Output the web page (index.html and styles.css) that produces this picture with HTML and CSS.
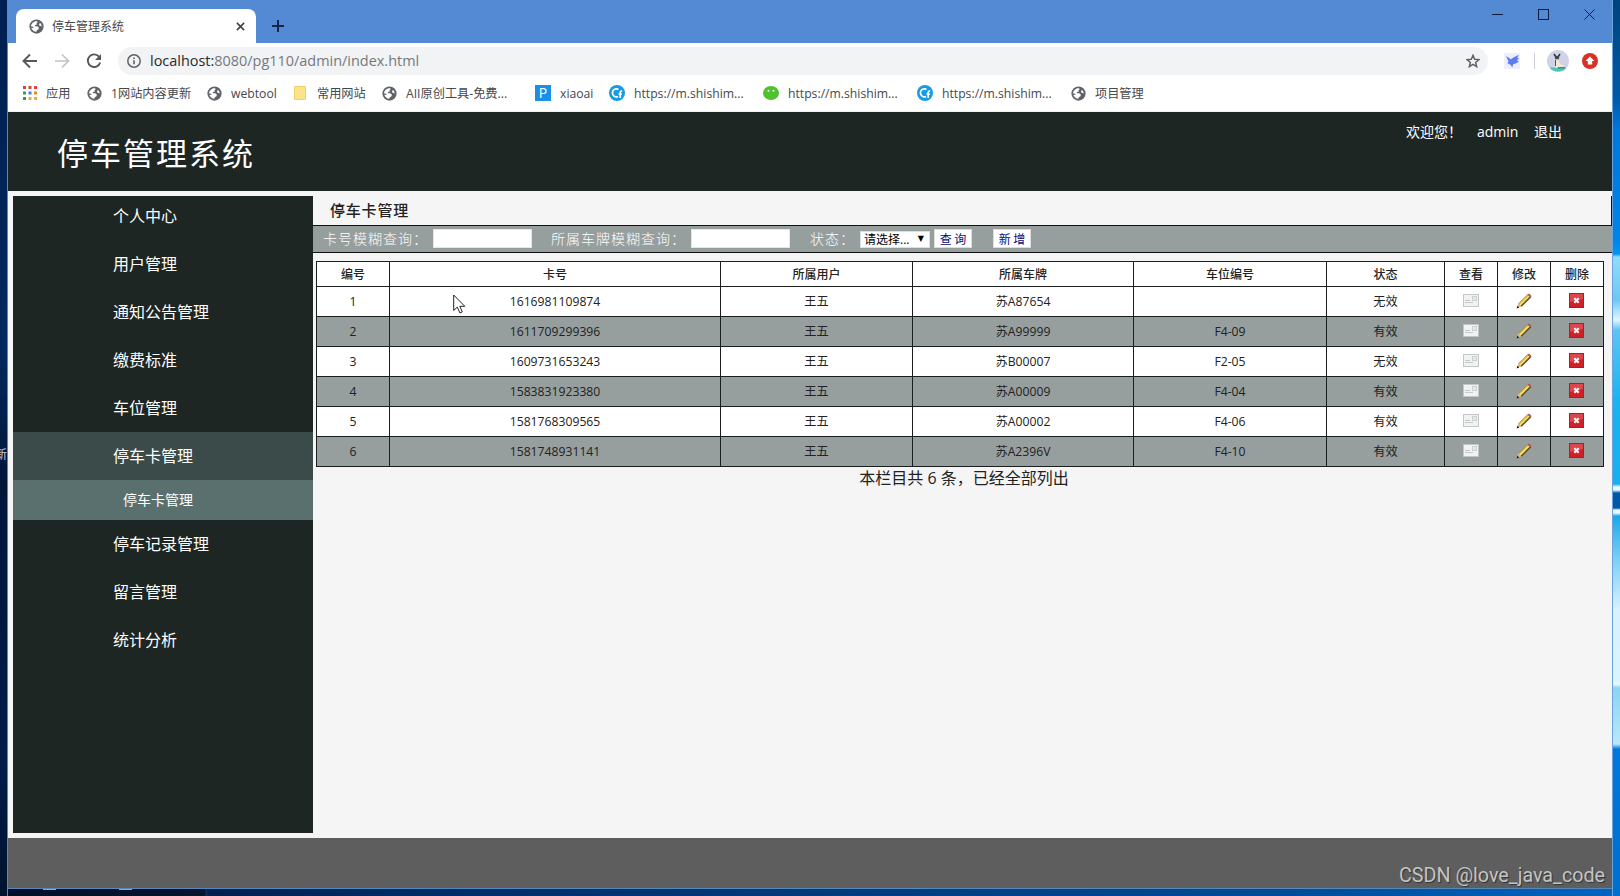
FILE: index.html
```html
<!DOCTYPE html>
<html lang="zh-CN">

<head>
    <meta charset="UTF-8">
    <title>停车管理系统</title>
    <link rel="stylesheet" href="styles.css">
</head>

<body>
    <!-- shared icons -->
    <svg class="defs" width="0" height="0">
        <symbol id="globe" viewBox="0 0 16 16">
            <circle cx="8" cy="8" r="7.600" fill="#5f6368" />
            <path d="M2 7.600C2.600 4.800 4.800 2.800 7.600 2.200L9.400 3.200 8 4.400 8.400 5.800 6.400 6.400 6.200 7.600h2.600l1.800 1.600-.5 1.800-1.700.9-.6 1.800C5.200 13.500 3.100 11.800 2.400 9.400l2.500.3L4.300 8.200z" fill="#fff" />
            <path d="M11.200 4.600l1.500.2L13.600 8l-1.400-.6-1.600-.8z" fill="#fff" />
        </symbol>
        <symbol id="cf" viewBox="0 0 16 16">
            <circle cx="8" cy="8" r="8" fill="#189be6" />
            <path d="M9.500 4.500A4 4 0 1 0 9 11.600M13.200 6.200c-1.600-.4-2 .4-2 1.800v5M9.500 9h3.400" fill="none" stroke="#fff" stroke-width="1.700" />
        </symbol>
        <symbol id="view" viewBox="0 0 16 13">
            <rect x=".5" y=".5" width="15" height="12" fill="#f1f2f3" stroke="#c3c6c7" />
            <rect x="9.500" y="2.500" width="4" height="4" fill="#e6e8e9" stroke="#cdd0d1" />
            <path d="M2 6.500h5M2 8.500h8" stroke="#c6c9ca" />
        </symbol>
        <symbol id="edit" viewBox="0 0 16 16">
            <path d="M1 15l1.500-4.500L12 1.200 14.800 3.800 5.200 13.300z" fill="#e3bf3d" />
            <path d="M3.800 12L13.200 2.600" stroke="#fff0a0" stroke-width="1" />
            <path d="M5.200 13.300L14.800 3.800" stroke="#5f4a12" stroke-width="1.300" />
            <path d="M2.500 10.500L12 1.200" stroke="#a78524" stroke-width=".7" />
            <path d="M11.500 1.700L13 .4l2.600 2.500-1.300 1.500z" fill="#b2574f" />
            <path d="M1 15l1.500-4.500 2.700 2.800z" fill="#d8b98c" />
            <path d="M.6 15.400l.9-2.700 1.700 1.700z" fill="#111" />
        </symbol>
        <symbol id="del" viewBox="0 0 16 15">
            <rect x=".5" y=".5" width="14" height="14" fill="#cf2029" stroke="#a0222a" />
            <path d="M1 1h13v5L1 9z" fill="#dc474e" />
            <path d="M5.300 5.300l4.400 4.400M9.700 5.300l-4.400 4.400" stroke="#fff" stroke-width="2.100" />
        </symbol>
    </svg>

    <div class="desktop-left"><span>新</span></div>

    <div class="window">
        <div class="titlebar">
            <div class="tab">
                <svg class="ico" width="15" height="15"><use href="#globe" /></svg>
                <span>停车管理系统</span>
                <svg class="tab-close" width="9" height="9" viewBox="0 0 10 10"><path d="M1 1l8 8M9 1L1 9" stroke="#3c4043" stroke-width="1.700" /></svg>
            </div>
            <svg class="plus" width="12" height="12" viewBox="0 0 12 12"><path d="M6 0v12M0 6h12" stroke="#15284a" stroke-width="2" /></svg>
            <div class="controls">
                <svg width="11" height="11" viewBox="0 0 11 11"><path d="M0 5.500h11" stroke="#0c1c3c" /></svg>
                <svg width="11" height="11" viewBox="0 0 11 11"><rect x=".5" y=".5" width="10" height="10" fill="none" stroke="#0c1c3c" /></svg>
                <svg width="11" height="11" viewBox="0 0 11 11"><path d="M.5 .5l10 10M10.500 .5l-10 10" stroke="#0c1c3c" /></svg>
            </div>
        </div>

        <div class="toolbar">
            <svg class="nav" width="16" height="16" viewBox="0 0 16 16"><path d="M15 8H2M8 1.500L1.500 8 8 14.500" fill="none" stroke="#55585c" stroke-width="1.900" /></svg>
            <svg class="nav" width="16" height="16" viewBox="0 0 16 16"><path d="M1 8h13M8 1.500L14.500 8 8 14.500" fill="none" stroke="#c0c3c6" stroke-width="1.700" /></svg>
            <svg class="nav" width="16" height="16" viewBox="0 0 16 16"><path d="M13.400 4.200A6.300 6.300 0 1 0 14.200 9.500" fill="none" stroke="#55585c" stroke-width="1.900" /><path d="M15 1v6H9z" fill="#55585c" /></svg>
            <div class="address">
                <svg width="14" height="14" viewBox="0 0 14 14"><circle cx="7" cy="7" r="6.200" fill="none" stroke="#5f6368" stroke-width="1.500" /><path d="M7 6.200v4M7 3.400v1.500" stroke="#5f6368" stroke-width="1.600" /></svg>
                <span class="url"><b>localhost:</b>8080/pg110/admin/index.html</span>
                <svg class="star" width="14" height="14" viewBox="0 0 16 16"><path d="M8 1.500l1.900 4.600 4.900.3-3.800 3.200 1.200 4.800L8 11.800l-4.200 2.600L5 9.600 1.200 6.400l4.900-.3z" fill="none" stroke="#5f6368" stroke-width="1.700" /></svg>
            </div>
            <svg class="bird" width="16" height="16" viewBox="0 0 16 16"><rect width="16" height="16" fill="#eeeefe" /><path d="M2 3l5 3.200L9 4.800 14.800 1.800 13.300 5.200 15.500 5.600 12.800 7.300 15 8.800 11.500 10.500 9 11.500 8.300 14.500 6.500 11.800 3.500 10.300 4.500 8.500z" fill="#5b7df0" /></svg>
            <i class="sep"></i>
            <svg class="avatar" width="22" height="22" viewBox="0 0 22 22">
                <circle cx="11" cy="11" r="11" fill="#cfd3e6" />
                <path d="M2.500 17.500h17A11 11 0 0 1 2.500 17.500z" fill="#45c8b5" />
                <path d="M7 4l2 3M13 4l-2 3" stroke="#333" stroke-width="1.500" />
                <ellipse cx="10" cy="7.800" rx="2.200" ry="2" fill="#47474a" />
                <path d="M8.800 9.500h2.400l2 4.500 4 1.800-.5 1.700H7.500z" fill="#efe8d8" />
                <path d="M8.500 10v6M11 17.800h7" stroke="#53504a" />
            </svg>
            <svg width="16" height="16" viewBox="0 0 16 16"><circle cx="8" cy="8" r="8" fill="#d93025" /><path d="M8 3.600l4.400 4.400H10.200V11.500H5.800V8H3.600z" fill="#fff" /></svg>
        </div>

        <div class="bookmarks">
            <a class="bm-apps">
                <svg width="14" height="14" viewBox="0 0 14 14">
                    <path d="M0 0h3v3H0zM5.500 0h3v3h-3zM11 0h3v3h-3z" fill="#d9453a" />
                    <path d="M0 5.500h3v3H0z" fill="#2e9e54" /><path d="M5.500 5.500h3v3h-3z" fill="#3f7fe0" /><path d="M11 5.500h3v3h-3z" fill="#e08a2c" />
                    <path d="M0 11h3v3H0z" fill="#2e9e54" /><path d="M5.500 11h3v3h-3zM11 11h3v3h-3z" fill="#e8b22e" />
                </svg>应用</a>
            <a class="bm-web"><svg width="15" height="15"><use href="#globe" /></svg>1网站内容更新</a>
            <a class="bm-tool"><svg width="15" height="15"><use href="#globe" /></svg>webtool</a>
            <a class="bm-folder"><i class="folder"></i>常用网站</a>
            <a class="bm-ai"><svg width="15" height="15"><use href="#globe" /></svg>AII原创工具-免费...</a>
            <a class="bm-p"><i class="p-ico">P</i>xiaoai</a>
            <a class="bm-s"><svg width="16" height="16"><use href="#cf" /></svg>https://m.shishim...</a>
            <a class="bm-s"><svg width="16" height="14" viewBox="0 0 16 14"><ellipse cx="8" cy="7" rx="8" ry="7" fill="#4fc02e" /><circle cx="5.500" cy="4.800" r="1" fill="#fff" /><circle cx="10.500" cy="4.800" r="1" fill="#fff" /></svg>https://m.shishim...</a>
            <a class="bm-s"><svg width="16" height="16"><use href="#cf" /></svg>https://m.shishim...</a>
            <a><svg width="15" height="15"><use href="#globe" /></svg>项目管理</a>
        </div>

        <div class="header">
            <h1>停车管理系统</h1>
            <div class="user">
                <span class="hello">欢迎您！</span>
                <span class="name">admin</span>
                <span>退出</span>
            </div>
        </div>

        <div class="content">
            <div class="sidebar">
                <ul>
                    <li>个人中心</li>
                    <li>用户管理</li>
                    <li>通知公告管理</li>
                    <li>缴费标准</li>
                    <li>车位管理</li>
                    <li class="active">停车卡管理</li>
                    <li class="sub">停车卡管理</li>
                    <li>停车记录管理</li>
                    <li>留言管理</li>
                    <li>统计分析</li>
                </ul>
            </div>

            <div class="main">
                <h2>停车卡管理</h2>
                <div class="search">
                    <label class="l1">卡号模糊查询：</label>
                    <input type="text">
                    <label class="l2">所属车牌模糊查询：</label>
                    <input type="text">
                    <label class="l3">状态：</label>
                    <span class="select">请选择...<i>▼</i></span>
                    <button class="query">查 询</button>
                    <button>新 增</button>
                </div>

                <table>
                    <colgroup>
                        <col class="c-id"><col class="c-card"><col class="c-user"><col class="c-plate"><col class="c-place"><col class="c-state"><col class="c-op"><col class="c-op"><col class="c-op">
                    </colgroup>
                    <tr><th>编号</th><th>卡号</th><th>所属用户</th><th>所属车牌</th><th>车位编号</th><th>状态</th><th>查看</th><th>修改</th><th>删除</th></tr>
                    <tr>
                        <td>1</td><td>1616981109874</td><td>王五</td><td>苏A87654</td><td></td><td>无效</td>
                        <td><svg width="16" height="13"><use href="#view" /></svg></td><td><svg width="16" height="16"><use href="#edit" /></svg></td><td><svg width="16" height="15"><use href="#del" /></svg></td>
                    </tr>
                    <tr>
                        <td>2</td><td>1611709299396</td><td>王五</td><td>苏A99999</td><td>F4-09</td><td>有效</td>
                        <td><svg width="16" height="13"><use href="#view" /></svg></td><td><svg width="16" height="16"><use href="#edit" /></svg></td><td><svg width="16" height="15"><use href="#del" /></svg></td>
                    </tr>
                    <tr>
                        <td>3</td><td>1609731653243</td><td>王五</td><td>苏B00007</td><td>F2-05</td><td>无效</td>
                        <td><svg width="16" height="13"><use href="#view" /></svg></td><td><svg width="16" height="16"><use href="#edit" /></svg></td><td><svg width="16" height="15"><use href="#del" /></svg></td>
                    </tr>
                    <tr>
                        <td>4</td><td>1583831923380</td><td>王五</td><td>苏A00009</td><td>F4-04</td><td>有效</td>
                        <td><svg width="16" height="13"><use href="#view" /></svg></td><td><svg width="16" height="16"><use href="#edit" /></svg></td><td><svg width="16" height="15"><use href="#del" /></svg></td>
                    </tr>
                    <tr>
                        <td>5</td><td>1581768309565</td><td>王五</td><td>苏A00002</td><td>F4-06</td><td>有效</td>
                        <td><svg width="16" height="13"><use href="#view" /></svg></td><td><svg width="16" height="16"><use href="#edit" /></svg></td><td><svg width="16" height="15"><use href="#del" /></svg></td>
                    </tr>
                    <tr>
                        <td>6</td><td>1581748931141</td><td>王五</td><td>苏A2396V</td><td>F4-10</td><td>有效</td>
                        <td><svg width="16" height="13"><use href="#view" /></svg></td><td><svg width="16" height="16"><use href="#edit" /></svg></td><td><svg width="16" height="15"><use href="#del" /></svg></td>
                    </tr>
                </table>
                <p class="total">本栏目共 6 条，已经全部列出</p>
            </div>
        </div>

        <div class="footer"></div>
        <!-- tops of the desktop icons under the window -->
        <div class="desktop-bottom"><i></i><i></i></div>
    </div>

    <div class="desktop-right"></div>

    <svg class="cursor" width="13" height="20" viewBox="0 0 13 20"><path d="M.7 1v15.500l3.600-3.400 2.600 5.800 2.400-1-2.500-5.600h5z" fill="#fff" stroke="#222" /></svg>
    <div class="watermark">CSDN @love_java_code</div>
</body>

</html>
```

FILE: styles.css
```css
* {
    box-sizing: border-box;
}

body {
    margin: 0;
    width: 1620px;
    height: 896px;
    display: flex;
    overflow: hidden;
    position: relative;
    background: #001c48;
    font-family: "Open Sans", "Noto Sans CJK SC", sans-serif;
    font-size: 12px;
    color: #222;
}

.defs {
    position: absolute;
}

svg {
    flex: none;
    display: block;
}

/* wallpaper around the window */
.desktop-left {
    width: 8px;
    padding-top: 446px;
    overflow: hidden;
    border-right: 1px solid #5d87b8;
    background: linear-gradient(#001f50, #002a5e 350px, #00153a 480px, #001c48 760px, #00132f);
    color: #ccd;
    line-height: 18px;
}

.desktop-left span {
    display: block;
    margin-left: -5px;
}

.desktop-right {
    width: 8px;
    border-left: 1px solid #6da2dc;
    background: linear-gradient(#00437c, #005aa8 100px, #0078dc 130px, #0084e8 240px, #0096f0 254px, #8fdcfa 257px, #6cc8f5 300px, #e0f6ff 320px, #5cc4f4 330px, #19b4f0 400px, #16b0ee 484px, #e8faff 487px, #e8faff 490px, #0059a8 493px, #0059a8 508px, #e8faff 510px, #e8faff 513px, #19a8e8 516px, #7cd0f6 560px, #d8f2ff 610px, #d8f4ff 680px, #e8faff 684px, #8ad4f4 688px, #b8e8fa 744px, #0078dc 749px, #006fce);
}

.desktop-bottom {
    flex: none;
    height: 8px;
    border-top: 1px solid #5588bb;
    background: linear-gradient(90deg, #020f2a 0, #04132e 197px, #0b3158 198px, #00204f 200px, #002c66 400px, #004a96 1250px, #0064c0 1604px);
    display: flex;
    padding-left: 35px;
    gap: 63px;
}

.desktop-bottom i {
    width: 13px;
    height: 1px;
    background: #8fa6d8;
}

.window {
    width: 1604px;
    height: 896px;
    background: #f5f5f5;
    display: flex;
    flex-direction: column;
}

/* browser chrome */
.titlebar {
    height: 43px;
    background: #5489d4;
    display: flex;
    padding: 9px 12px 0 8px;
}

.tab {
    width: 240px;
    background: #fff;
    border-radius: 8px 8px 0 0;
    display: flex;
    align-items: center;
    padding: 0 11px 0 13px;
    color: #45484c;
}

.tab span {
    margin-left: 8px;
    flex: 1;
}

.plus {
    margin: 11px 0 0 16px;
}

.controls {
    margin-left: auto;
    display: flex;
    gap: 35px;
    padding-right: 5px;
}

.toolbar {
    height: 35px;
    background: #fff;
    display: flex;
    align-items: center;
    padding: 1px 14px 0 14px;
}

.nav {
    margin-right: 16px;
}

.address {
    width: 1370px;
    height: 28px;
    border-radius: 14px;
    background: #f1f3f4;
    display: flex;
    align-items: center;
    padding: 0 8px 0 9px;
    font-size: 14.450px;
    color: #76797d;
}

.url {
    margin: -2px 0 0 9px;
    flex: 1;
    white-space: nowrap;
}

.url b {
    font-weight: normal;
    color: #26282b;
}

.bird {
    margin-left: 16px;
}

.sep {
    width: 1px;
    height: 16px;
    margin: 0 12px 0 14px;
    background: #ccd;
}

.avatar {
    margin-right: 13px;
}

.bookmarks {
    height: 34px;
    background: #fff;
    border-bottom: 1px solid #f0f0f0;
    display: flex;
    align-items: center;
    padding: 0 0 3px 15px;
    color: #45484c;
    font-size: 12.200px;
}

.bookmarks a {
    display: flex;
    align-items: center;
    gap: 9px;
    white-space: nowrap;
}

.bm-apps { width: 64px; }
.bm-web { width: 120px; }
.bm-tool { width: 87px; }
.bm-folder { width: 88px; }
.bm-ai { width: 153px; }
.bm-p { width: 74px; }
.bm-s { width: 154px; }

.folder {
    width: 12px;
    height: 14px;
    margin-right: 2px;
    background: #fbe38a;
    border: 1px solid #ecd06a;
    border-radius: 1px;
}

.p-ico {
    width: 16px;
    height: 16px;
    background: #1b8fe6;
    color: #fff;
    font-style: normal;
    line-height: 16px;
    text-align: center;
    font-size: 14px;
}

/* page */
.header {
    height: 79px;
    background: #1e2624;
    color: #fff;
    display: flex;
    justify-content: space-between;
}

.header h1 {
    margin: 19px 0 0 49px;
    font-weight: normal;
    font-size: 31px;
    line-height: 44px;
    letter-spacing: 2px;
}

.user {
    display: flex;
    padding: 10px 50px 0 0;
    font-size: 14px;
    line-height: 20px;
}

.hello { width: 71px; }
.name { width: 57px; }

.content {
    height: 647px;
    padding: 5px 0 5px 5px;
    display: flex;
}

.sidebar {
    width: 300px;
    background: #1e2624;
    color: #fff;
    overflow: hidden;
}

.sidebar ul {
    list-style: none;
    margin: -4px 0 0;
    padding: 0;
}

.sidebar li {
    height: 48px;
    line-height: 48px;
    padding-left: 100px;
    font-size: 16px;
}

.sidebar li.active {
    background: #3a4b49;
}

.sidebar li.sub {
    height: 40px;
    line-height: 40px;
    padding-left: 110px;
    font-size: 14px;
    background: #5a706e;
}

.main {
    flex: 1;
}

.main h2 {
    margin: 0;
    height: 30px;
    padding-left: 17px;
    border-bottom: 1px solid #111;
    border-right: 1px solid #111;
    font-size: 15px;
    font-weight: 500;
    line-height: 29px;
    letter-spacing: 0.800px;
}

.search {
    height: 27px;
    background: #969e9e;
    border-bottom: 1px solid #111;
    display: flex;
    align-items: center;
    padding: 0 0 2px 10px;
    color: #fff;
    font-size: 14px;
    letter-spacing: 1px;
}

.l1 { width: 110px; }
.l2 { width: 140px; }
.l3 { width: 50px; }

.search label {
    white-space: nowrap;
    font-weight: 300;
}

.search input {
    width: 99px;
    height: 19px;
    margin: 0 19px 0 0;
    padding: 0;
    border: 1px solid #e6e6e6;
    background: #fff;
}

.search .l3 {
    margin-left: 1px;
}

.select {
    width: 70px;
    height: 17px;
    margin: 2px 4px 0 0;
    padding: 0 5px 0 3px;
    background: #fff;
    border: 1px solid #cfe4ea;
    color: #000;
    font-size: 12px;
    line-height: 16px;
    letter-spacing: 0;
    display: flex;
    justify-content: space-between;
    white-space: nowrap;
}

.select i {
    font: 8px/13px "DejaVu Sans", sans-serif;
}

.search button {
    width: 38px;
    height: 19px;
    margin-top: 1px;
    padding: 0;
    border: 1px solid #ddd;
    background: #fff;
    color: #0a0a78;
    font: 12px/17px "Noto Sans CJK SC", sans-serif;
    letter-spacing: 0;
}

.search .query {
    margin-right: 21px;
}

table {
    width: 1288px;
    margin: 8px 0 0 3px;
    border-collapse: collapse;
    table-layout: fixed;
    background: #fff;
}

.c-id { width: 73px; }
.c-card { width: 331px; }
.c-user { width: 192px; }
.c-plate { width: 221px; }
.c-place { width: 193px; }
.c-state { width: 118px; }
.c-op { width: 53px; }

th, td {
    height: 30px;
    padding: 0;
    border: 1px solid #1a1e1e;
    text-align: center;
    line-height: 18px;
}

td {
    font-size: 12.200px;
}

th {
    height: 25px;
    padding-top: 2px;
    font-weight: 500;
}

tr:nth-child(odd) td {
    background: #969e9e;
}

td svg {
    margin: 0 auto;
    position: relative;
    top: -1px;
}

.total {
    margin: 0;
    padding-left: 3px;
    text-align: center;
    font-size: 16px;
    line-height: 23px;
}

.footer {
    flex: none;
    height: 50px;
    background: #5e5e5e;
}

.cursor {
    position: absolute;
    left: 453px;
    top: 294px;
}

.watermark {
    position: absolute;
    right: 15px;
    top: 864px;
    font: 19.700px/24px Roboto, sans-serif;
    color: #c4c4c4;
    text-shadow: 1px 1px 1px #333;
}
```
